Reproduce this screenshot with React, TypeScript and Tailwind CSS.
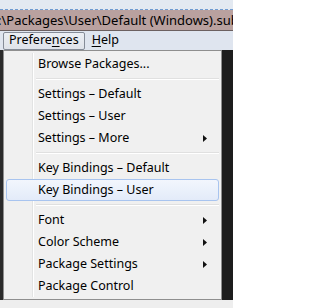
type Item = { label: string; sub?: boolean; active?: boolean } | "sep";

const items: Item[] = [
  { label: "Browse Packages..." },
  "sep",
  { label: "Settings – Default" },
  { label: "Settings – User" },
  { label: "Settings – More", sub: true },
  "sep",
  { label: "Key Bindings – Default" },
  { label: "Key Bindings – User", active: true },
  "sep",
  { label: "Font", sub: true },
  { label: "Color Scheme", sub: true },
  { label: "Package Settings", sub: true },
  { label: "Package Control" },
];

function Arrow() {
  return (
    <svg width="4" height="7" viewBox="0 0 4 7" className="mr-[11px]">
      <path d="M0 0 L4 3.5 L0 7 Z" fill="#111" />
    </svg>
  );
}

export default function App() {
  return (
    <div
      className="w-[233px] h-[308px] overflow-hidden bg-[#f4f4f4] flex flex-col text-[12.5px] text-black"
      style={{ fontFamily: '"Noto Sans", "DejaVu Sans", sans-serif' }}
    >
      <div className="h-[10px] bg-[#e3e9f1] border-b border-dashed border-[#6f9bd1]" />
      <div className="h-[21px] bg-[#b9a19f] flex items-center whitespace-nowrap text-[13px] leading-none border-b border-[#6c6060]">
        <span className="-ml-[2px]">:\Packages\User\Default (Windows).sub</span>
      </div>
      <div className="h-[19px] bg-[#dfe5ef] flex items-center pl-[3px] gap-[6px] whitespace-nowrap">
        <div className="h-[18px] px-[5px] flex items-center border border-[#858c98] rounded-[2px] bg-gradient-to-b from-[#eceff4] to-[#dfe3ea]">
          Prefere<span className="underline underline-offset-2">n</span>ces
        </div>
        <div className="px-[1px]">
          <span className="underline underline-offset-2">H</span>elp
        </div>
      </div>
      <div className="flex h-[250px] shrink-0 bg-[#1d1d1d]">
        <div className="w-[3px] shrink-0 bg-[#2a2a2a]" />
        <div className="w-[219px] shrink-0 h-[250px] bg-[#f0f0f0] border border-[#8e8e8e] relative flex flex-col py-[2px] px-[2px]">
          <div className="absolute left-[28px] top-[2px] bottom-[2px] w-[2px] border-l border-[#e2e3e3] border-r border-r-white" />
          {items.map((it, i) =>
            it === "sep" ? (
              <div key={i} className="h-[8px] shrink-0 flex items-center pl-[30px]">
                <div className="flex-1 h-[2px] border-t border-[#e0e0e0] border-b border-b-white" />
              </div>
            ) : (
              <div
                key={i}
                className={
                  "h-[22px] shrink-0 flex items-center justify-between pl-[31px] rounded-[3px] relative whitespace-nowrap " +
                  (it.active
                    ? "bg-gradient-to-b from-[#f2f6fd] to-[#e3ebf9] border border-[#a8c4ef]"
                    : "border border-transparent")
                }
              >
                <span>{it.label}</span>
                {it.sub ? <Arrow /> : null}
              </div>
            )
          )}
        </div>
        <div className="w-[11px] shrink-0 bg-[#1d1d1d]" />
      </div>
      <div className="flex-1 bg-[#eeeeee]" />
    </div>
  );
}
